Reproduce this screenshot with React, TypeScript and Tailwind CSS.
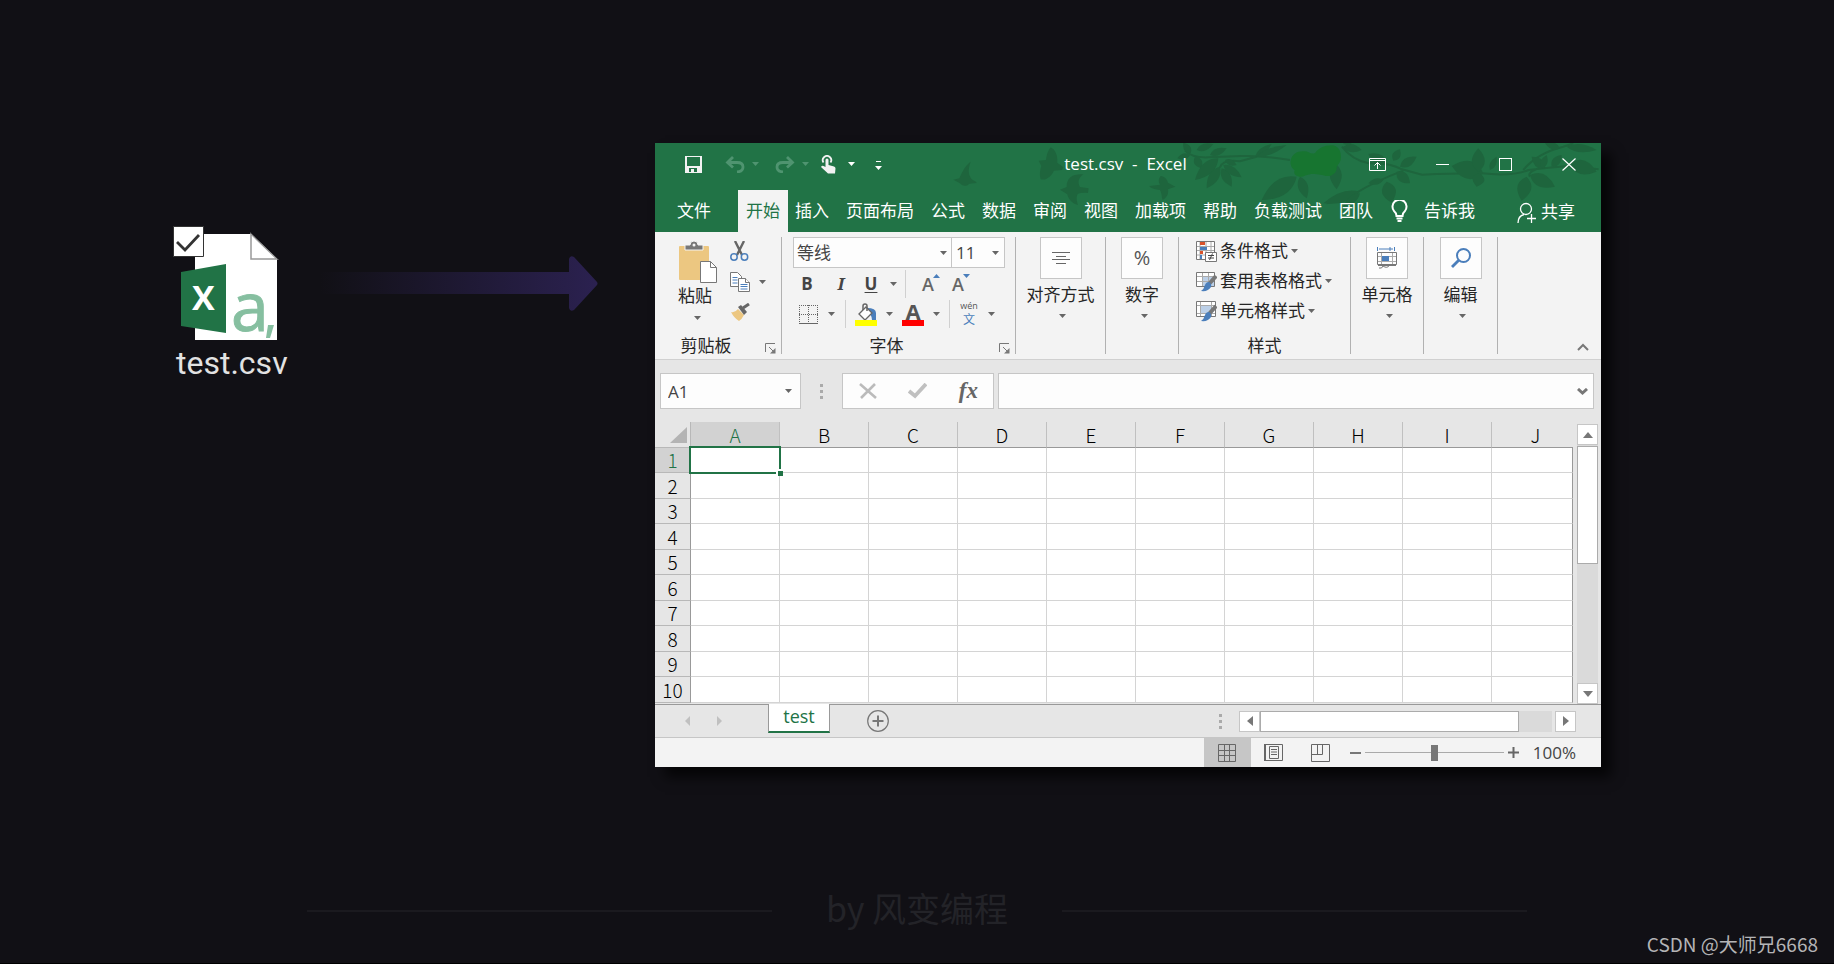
import type { ReactNode } from 'react';
import clsx from 'clsx';

const COLUMNS = ['A', 'B', 'C', 'D', 'E', 'F', 'G', 'H', 'I', 'J'];
const ROWS = [1, 2, 3, 4, 5, 6, 7, 8, 9, 10];
const TABS = ['插入', '页面布局', '公式', '数据', '审阅', '视图', '加载项', '帮助', '负载测试', '团队'];

function Caret({ className }: { className?: string }) {
  return (
    <svg viewBox="0 0 7 4" className={clsx('w-[7px] h-1 shrink-0', className)} fill="currentColor">
      <path d="M0 0h7L3.500 4z" />
    </svg>
  );
}

function CaretButton({ label, className }: { label: string; className?: string }) {
  return (
    <button aria-label={label} className={clsx('flex h-5 items-center justify-center text-[#666]', className)}>
      <Caret />
    </button>
  );
}

// Leaf from its base (x1, y1) to its tip (x2, y2)
function Leaf({ p }: { p: number[] }) {
  const [x1, y1, x2, y2, w] = p;
  const dx = x2 - x1;
  const dy = y2 - y1;
  const len = Math.hypot(dx, dy);
  const nx = (-dy / len) * w * 1.5;
  const ny = (dx / len) * w * 1.5;
  const mx = x1 + dx * 0.4;
  const my = y1 + dy * 0.4;
  return <path d={`M${x1} ${y1}Q${mx + nx} ${my + ny} ${x2} ${y2}Q${mx - nx} ${my - ny} ${x1} ${y1}z`} />;
}

const LEAVES = [
  [180, 45, 142, 55, 12], [182, 40, 160, 8, 14], [200, 30, 250, 12, 14], [240, 45, 290, 25, 14],
  [195, 50, 215, 85, 16], [265, 55, 195, 120, 24], [270, 80, 230, 145, 20], [275, 85, 305, 140, 18],
  [280, 75, 335, 112, 16], [285, 60, 320, 75, 12], [375, 50, 425, 12, 12], [380, 50, 470, 15, 12],
  [500, 110, 395, 180, 32], [510, 110, 530, 175, 20], [615, 70, 620, 148, 24], [640, 20, 695, 30, 16],
  [640, 12, 680, -10, 14], [690, 155, 580, 190, 20], [690, 160, 640, 200, 14], [770, 70, 715, 42, 20],
  [790, 62, 810, 28, 16], [810, 80, 860, 50, 18], [800, 95, 840, 130, 20], [770, 125, 785, 188, 28],
  [760, 120, 715, 130, 12], [1060, 100, 965, 78, 36], [1045, 95, 1045, 25, 26], [1050, 100, 1040, 140, 24],
  [1080, 90, 1100, 50, 12], [1190, 110, 1175, 182, 28], [1200, 105, 1275, 140, 26], [1245, 85, 1205, 50, 18],
  [1235, 85, 1250, 45, 14], [1265, 80, 1295, 45, 16], [1290, 25, 1245, 10, 14], [1310, 20, 1400, 30, 16],
  [1320, 70, 1400, 95, 28],
];

function TitleArt() {
  return (
    <svg viewBox="0 0 946 89" className="absolute right-0 top-0 h-[89px] w-[946px]" fill="#1e653d" aria-hidden="true">
      <g transform="translate(-5 -3) scale(.3333)">
        <path d="M962 65c-6 18-8 32-2 44 2 8 8 12 18 16l2 4-22 2c-4 6-14 8-22 4-6-8-16-10-26-16l18-4c10-22 18-38 34-50z" />
        <path d="M1202 22c12 6 22 22 20 46l18 14-4 8-24 2c-8 16-22 30-40 26-4-14-2-28 2-40l-8-16 22-2c2-16 6-28 14-38z" />
        <path d="M1300 103c-30-2-50 8-50 38l-20 8 22 14c4 16 14 28 32 32-4-14-6-26 0-34 12-4 22-2 30-2l2-14-26-4c-8-14-4-28 10-38z" />
      </g>
      <g transform="translate(475 -3) scale(.3333)">
        <path d="M92 108c-8 10-6 18-2 26l-32 4c4 8 20 10 32 12 6 10 4 20 8 30 14-8 18-18 16-32l22-8-22-12c-2-10-10-18-22-20z" />
        <path
          d="M165 32q20 22 70 20l100-4q60-2 145 12M270 82q10-25 60-18l50-14M636 20q30 40 80 50 60-4 100 18l60 16q120-6 180-4 90 10 140-10 60-8 120-12l90 10M590 190q60-10 90-32 60-36 140-66M1180 90q40-50 120-70l30-10M1200 110q-10-14 30-26"
          fill="none"
          stroke="#1e653d"
          strokeWidth="6"
        />
        {LEAVES.map((p, i) => (
          <Leaf key={i} p={p} />
        ))}
        <path fill="#177530" d="M482 62c4-20 20-30 42-28 12 0 20 12 32 4 10-14 30-24 54-22 16 4 26 20 22 44-4 14-12 14-12 26-2 16-18 24-32 22-16-4-30-6-44-6-16 2-24 10-36 8-12-2-18-10-14-20-8-4-14-16-12-28z" />
      </g>
    </svg>
  );
}

function TitleBar() {
  return (
    <div className="relative grid h-[47px] grid-cols-[1fr_auto_1fr] items-center pb-[5px] pr-[25px] text-white">
      <div className="flex items-center pl-[30px]">
        <button aria-label="保存">
          <svg viewBox="0 0 17 17" className="h-[17px] w-[17px]">
            <path fillRule="evenodd" d="M0 0h17v17H0zM2 1v9h13V1zM4 12v4h2v-3h3v3h3v-4z" fill="#f2f2f2" />
          </svg>
        </button>
        <button aria-label="撤消" className="ml-[23px] flex items-center gap-[7px] text-[#4f9470]">
          <svg viewBox="0 0 20 17" className="h-[17px] w-5" fill="none" stroke="currentColor" strokeWidth="2.800">
            <path d="M8 1 2.500 6.500l5.500 5M2.500 6.500H12q6 0 6 4.500t-6 5" />
          </svg>
          <Caret />
        </button>
        <button aria-label="恢复" className="ml-4 flex items-center gap-[7px] text-[#4f9470]">
          <svg viewBox="0 0 20 17" className="h-[17px] w-5" fill="none" stroke="currentColor" strokeWidth="2.800">
            <path d="m12 1 5.500 5.500-5.500 5M17.500 6.500H8q-6 0-6 4.500t6 5" />
          </svg>
          <Caret />
        </button>
        <button aria-label="触摸/鼠标模式" className="ml-[11px] flex items-center gap-3">
          <svg viewBox="0 0 16 19" className="h-[19px] w-4" fill="#f2f2f2">
            <path d="M5.500 5a1.500 1.500 0 0 1 3 0v5l5.500 1.500q1.500.5 1.500 2L15 18.500H8L1 12q1-2 2.500-1l2 1z" />
            <path d="M3.500 7.500A4.200 4.200 0 1 1 10.500 7.500" fill="none" stroke="#f2f2f2" strokeWidth="1.800" />
          </svg>
          <Caret />
        </button>
        <button aria-label="自定义快速访问工具栏" className="ml-5 flex flex-col items-center gap-1 pt-[2px]">
          <span className="h-px w-[5px] bg-white" />
          <Caret className="w-[6px]" />
        </button>
      </div>
      <h1 className="whitespace-pre pl-5 text-[17px] leading-6">test.csv  -  Excel</h1>
      <div className="flex items-center justify-end gap-[50px]">
        <button aria-label="功能区显示选项">
          <svg viewBox="0 0 17 13" className="h-[13px] w-[17px]" fill="none" stroke="white">
            <path d="M.5.5h16v12H.5zM.5 2.500h16M8.500 11V4.500M5.500 7.500l3-3 3 3" />
          </svg>
        </button>
        <button aria-label="最小化" className="h-px w-[13px] bg-white" />
        <button aria-label="最大化" className="h-[13px] w-[13px] border border-white" />
        <button aria-label="关闭">
          <svg viewBox="0 0 14 13" className="h-[13px] w-[14px]" fill="none" stroke="white" strokeWidth="1.200">
            <path d="m.5.5 13 12M13.500.5l-13 12" />
          </svg>
        </button>
      </div>
    </div>
  );
}

function RibbonTabs() {
  return (
    <nav className="relative flex h-[42px] items-center whitespace-nowrap text-[17px] leading-6 text-white">
      <button className="ml-[22px]">文件</button>
      <button className="ml-[27px] h-full bg-[#f3f3f3] px-2 text-[#217346]">开始</button>
      <div className="ml-[7px] flex gap-[17px]">
        {TABS.map((tab) => (
          <button key={tab}>{tab}</button>
        ))}
      </div>
      <button className="ml-[18px] flex items-center gap-4">
        <svg viewBox="0 0 17 22" className="h-[22px] w-[17px]" fill="none" stroke="white" strokeWidth="2">
          <path d="M5.500 16q0-3-2.500-5a7 7 0 1 1 11 0q-2.500 2-2.500 5z" />
          <path d="M5.500 18.500h6M6.500 21h4" />
        </svg>
        告诉我
      </button>
      <button className="ml-auto mr-[26px] flex items-center gap-1">
        <svg viewBox="0 0 20 22" className="mt-1 h-[22px] w-5" fill="none" stroke="white" strokeWidth="1.300">
          <circle cx="9" cy="7" r="5.500" />
          <path d="M1 21q0-7 6-8.500M14.500 12v9M10 16.500h9" />
        </svg>
        <span className="pt-[2px]">共享</span>
      </button>
    </nav>
  );
}

interface GroupProps {
  label?: string;
  labelClass?: string;
  className?: string;
  launcher?: boolean;
  children: ReactNode;
}

function Group({ label, labelClass, className, launcher, children }: GroupProps) {
  return (
    <section className={clsx('relative flex h-[117px] shrink-0 flex-col border-r border-[#b1b1b1]', className)}>
      <div className="flex flex-1">{children}</div>
      {label && <div className={clsx('mb-[-4px] text-center leading-6', labelClass)}>{label}</div>}
      {launcher && (
        <button aria-label={label + '设置'} className="absolute bottom-0 right-[5px]">
          <svg viewBox="0 0 11 11" className="h-[11px] w-[11px]" fill="none" stroke="#777">
            <path d="M.5 9V.5H10M4 4l5 5" />
            <path d="M10.500 5v5.500H5z" fill="#777" stroke="none" />
          </svg>
        </button>
      )}
    </section>
  );
}

function BigButton({ label, children }: { label: string; children: ReactNode }) {
  return (
    <button className="flex w-full flex-col items-center text-[#262626]">
      <span className="flex h-[42px] w-[42px] items-center justify-center border border-[#c6c6c6] bg-[#fdfdfd]">{children}</span>
      <span className="mt-1 leading-6">{label}</span>
      <Caret className="ml-1 mt-[7px] text-[#666]" />
    </button>
  );
}

function Brush() {
  return (
    <>
      <path d="m20 5-7 8" stroke="#777" strokeWidth="4" />
      <path d="M13 11q3 2 2 5-3 5-10 4 3-2 4-6 1-3 4-3z" fill="#4a7ebb" />
    </>
  );
}

function ConditionalIcon() {
  return (
    <svg viewBox="0 0 21 21" className="h-[21px] w-[21px]">
      <path d="M.5.5h18v18H.5z" fill="#fff" stroke="#777" />
      <path d="M4 1v17M10 1v17M15 1v17M1 5.500h17M1 9.500h17M1 14h17" stroke="#aaa" />
      <path d="M4 1h5v3H4zM4 10h3v3H4z" fill="#d9532c" />
      <path d="M4 6h7v3H4zM4 14h2v4H4z" fill="#4a7ebb" />
      <path d="M9.500 11.500h11v9h-11z" fill="#fff" stroke="#777" />
      <path d="M12 14.500h6M12 17h6M16.500 12.500 13.500 19" stroke="#444" />
    </svg>
  );
}

function TableFormatIcon() {
  return (
    <svg viewBox="0 0 21 21" className="h-[21px] w-[21px]" fill="none">
      <path d="M.5 1.500h18v14H.5z" fill="#fff" stroke="#777" />
      <path d="M7 6h11v9H7z" fill="#bcd0e8" />
      <path d="M6.500 2v13M12.500 2v13M1 5.500h17M1 10.500h17" stroke="#aaa" />
      <Brush />
    </svg>
  );
}

function CellStyleIcon() {
  return (
    <svg viewBox="0 0 21 21" className="h-[21px] w-[21px]" fill="none">
      <path d="M.5.5h19v15H.5z" fill="#fff" stroke="#777" />
      <path d="M5 5h10v7H5z" fill="#bcd0e8" />
      <path d="M4.500 1v14M15.500 1v14M1 4.500h18M1 12.500h18" stroke="#aaa" />
      <Brush />
    </svg>
  );
}

function ClipboardGroup() {
  return (
    <Group label="剪贴板" labelClass="pr-6" launcher className="w-[127px]">
      <button className="ml-[23px] flex w-[42px] flex-col items-start pt-1">
        <svg viewBox="0 0 39 43" className="h-[43px] w-[39px]">
          <path d="M2 5h28q1 0 1 1v33H2q-1 0-1-1V6q0-1 1-1z" fill="#ecc781" />
          <path d="M7 9V4h5q0-4 4-4t4 4h5v5z" fill="#777" stroke="#f3f3f3" />
          <circle cx="16" cy="4" r="1.500" fill="#f3f3f3" />
          <path d="M22.500 20.500h10l6 6v15h-16z" fill="#fff" stroke="#777" />
          <path d="M32.500 20.500v6h6" fill="none" stroke="#777" />
        </svg>
        <span className="leading-6">粘贴</span>
        <Caret className="ml-4 mt-2 text-[#666]" />
      </button>
      <div className="ml-[10px] flex flex-col gap-[11px] pt-1">
        <button aria-label="剪切">
          <svg viewBox="0 0 19 20" className="h-5 w-[19px]" fill="none">
            <path d="M5 0 12 14M14 0 7 14" stroke="#666" strokeWidth="2.400" />
            <circle cx="4" cy="16" r="3.200" stroke="#4a7ebb" strokeWidth="1.500" />
            <circle cx="14.500" cy="16" r="3.200" stroke="#4a7ebb" strokeWidth="1.500" />
          </svg>
        </button>
        <div className="flex items-center gap-[9px]">
          <button aria-label="复制">
            <svg viewBox="0 0 20 20" className="h-5 w-5" fill="#fff" stroke="#777">
              <path d="M.5.5h7l4 4v10H.5z" />
              <path d="M2.500 5.500h5M2.500 8h5M2.500 11h5" stroke="#4a7ebb" />
              <path d="M8.500 6.500h7l4 4v9h-11z" />
              <path d="M15.500 6.500v4h4" />
              <path d="M10.500 12.500h7M10.500 14.500h7M10.500 17h7" stroke="#4a7ebb" />
            </svg>
          </button>
          <CaretButton label="复制选项" />
        </div>
        <button aria-label="格式刷">
          <svg viewBox="0 0 20 18" className="h-[18px] w-5">
            <path d="M1 9q4 1 7-3l6 6q-2 4-5 6-5-3-8-9z" fill="#ecc781" />
            <path d="m8 4 3-2 6 7-3 3z" fill="#666" />
            <path d="m13 5 6-4" stroke="#666" strokeWidth="3" />
          </svg>
        </button>
      </div>
    </Group>
  );
}

function FontGroup() {
  return (
    <Group label="字体" labelClass="pr-6" launcher className="w-[234px]">
      <div className="ml-[11px] w-[212px]">
        <div className="flex h-[31px] border border-[#c6c6c6] bg-[#fdfdfd]">
          <div className="relative flex-1 border-r border-[#c6c6c6]">
            <select aria-label="字体" className="h-full w-full appearance-none pl-[3px] text-[#444] outline-none">
              <option>等线</option>
            </select>
            <Caret className="pointer-events-none absolute right-1 top-[13px] text-[#666]" />
          </div>
          <div className="relative w-[52px]">
            <select aria-label="字号" className="h-full w-full appearance-none pl-1 text-[#444] outline-none">
              <option>11</option>
            </select>
            <Caret className="pointer-events-none absolute right-[5px] top-[13px] text-[#666]" />
          </div>
        </div>
        <div className="flex h-[31px] items-center font-bold text-[#444]">
          <button className="w-7">B</button>
          <button className="ml-2 w-6 font-['Noto_Serif','DejaVu_Serif',serif] italic">I</button>
          <button className="ml-2 w-5 underline underline-offset-2">U</button>
          <CaretButton label="下划线选项" className="w-6" />
          <span className="h-7 w-px bg-[#d0d0d0]" />
          <button aria-label="增大字号" className="relative ml-4 w-[18px] text-left text-lg font-semibold text-[#666]">
            A
            <svg viewBox="0 0 7 4" className="absolute right-0 top-1 h-1 w-[7px]" fill="#4a7ebb"><path d="M0 4h7L3.500 0z" /></svg>
          </button>
          <button aria-label="减小字号" className="relative ml-3 w-[18px] text-left text-lg font-semibold text-[#666]">
            A
            <svg viewBox="0 0 7 4" className="absolute right-0 top-1 h-1 w-[7px]" fill="#4a7ebb"><path d="M0 0h7L3.500 4z" /></svg>
          </button>
        </div>
        <div className="flex h-[30px] items-center">
          <button aria-label="边框" className="ml-[6px]">
            <svg viewBox="0 0 19 19" className="h-[19px] w-[19px]" fill="none" stroke="#666">
              <path d="M.5 0v18M18.500 0v18M9.500 0v18M0 .5h19M0 9.500h19" strokeDasharray="1 1" />
              <path d="M0 18.500h19" />
            </svg>
          </button>
          <CaretButton label="边框选项" className="w-7" />
          <span className="h-7 w-px bg-[#d0d0d0]" />
          <button aria-label="填充颜色" className="ml-[10px]">
            <svg viewBox="0 0 22 23" className="h-[23px] w-[22px]">
              <path d="M12 5q9 0 9 5v7h-4q0-6-5-7z" fill="#4a7ebb" />
              <path d="m4 11 7-7 6 6-7 7z" fill="#fff" stroke="#666" strokeWidth="1.300" />
              <path d="M8 7V3q0-2 2-2t2 2v5" fill="none" stroke="#666" strokeWidth="1.500" />
              <path d="M0 17h22v6H0z" fill="#ff0" />
            </svg>
          </button>
          <CaretButton label="填充选项" className="w-[26px]" />
          <button aria-label="字体颜色" className="flex w-[23px] flex-col items-center">
            <span className="text-[22px] font-bold leading-[18px] text-[#555]">A</span>
            <span className="h-[6px] w-full bg-[#f00]" />
          </button>
          <CaretButton label="字体颜色选项" className="w-[26px]" />
          <span className="h-7 w-px bg-[#d0d0d0]" />
          <button className="ml-[10px] flex w-5 flex-col items-center text-[#555]">
            <span className="text-[9px] leading-[12px]">wén</span>
            <span className="text-xs leading-[16px] text-[#4a7ebb]">文</span>
          </button>
          <CaretButton label="拼音选项" className="w-7" />
        </div>
      </div>
    </Group>
  );
}

function Ribbon() {
  return (
    <div className="flex h-[128px] overflow-hidden border-b border-[#d0d0d0] bg-[#f3f3f3] pt-[5px] text-[17px] text-[#262626]">
      <ClipboardGroup />
      <FontGroup />
      <Group className="w-[90px]">
        <BigButton label="对齐方式">
          <svg viewBox="0 0 18 12" className="h-3 w-[18px]" stroke="#666">
            <path d="M0 .5h18M4 4.500h10M0 7.500h18M4 11.500h10" />
          </svg>
        </BigButton>
      </Group>
      <Group className="w-[73px]">
        <BigButton label="数字">
          <span className="text-xl text-[#555]">%</span>
        </BigButton>
      </Group>
      <Group label="样式" className="w-[172px]">
        <div className="ml-[17px] mt-[-1px] flex flex-col">
          <button className="flex h-[30px] items-center gap-[3px]">
            <ConditionalIcon />
            条件格式 <Caret className="text-[#666]" />
          </button>
          <button className="flex h-[30px] items-center gap-[3px]">
            <TableFormatIcon />
            套用表格格式 <Caret className="text-[#666]" />
          </button>
          <button className="flex h-[30px] items-center gap-[3px]">
            <CellStyleIcon />
            单元格样式 <Caret className="text-[#666]" />
          </button>
        </div>
      </Group>
      <Group className="w-[73px]">
        <BigButton label="单元格">
          <svg viewBox="0 0 20 22" className="h-[22px] w-5" fill="none" stroke="#777">
            <path d="M.5 0v4M17.500 0v4M2 2h14M13 0v4" stroke="#4a7ebb" />
            <path d="M.5 5.500h19v12H.5zM1 18.500h18M2 21q3 1 4-2 4 3 7-1" />
            <path d="M4.500 6v11M15.500 6v11M1 9.500h18M1 14.500h18" stroke="#aaa" />
            <path d="M5 9h7v5H5z" fill="#4a7ebb" stroke="none" />
          </svg>
        </BigButton>
      </Group>
      <Group className="w-[74px]">
        <BigButton label="编辑">
          <svg viewBox="0 0 20 20" className="h-5 w-5" fill="none" stroke="#4a7ebb">
            <circle cx="12.500" cy="7.500" r="6.500" strokeWidth="2" />
            <path d="m8 12-7 7" strokeWidth="2.800" />
          </svg>
        </BigButton>
      </Group>
      <button aria-label="折叠功能区" className="mb-2 ml-auto mr-3 self-end">
        <svg viewBox="0 0 12 8" className="h-2 w-3" fill="none" stroke="#777" strokeWidth="2">
          <path d="m1 7 5-5 5 5" />
        </svg>
      </button>
    </div>
  );
}

function Dots() {
  return (
    <span className="flex flex-col gap-[3px]">
      <span className="h-[3px] w-[3px] bg-[#aaa]" />
      <span className="h-[3px] w-[3px] bg-[#aaa]" />
      <span className="h-[3px] w-[3px] bg-[#aaa]" />
    </span>
  );
}

function FormulaBar() {
  return (
    <div className="flex items-center px-[5px] pb-[13px] pt-[13px] pr-[7px]">
      <div className="relative h-9 w-[141px] border border-[#c6c6c6] bg-[#fdfdfd]">
        <input aria-label="名称框" defaultValue="A1" className="h-full w-full px-[7px] text-[17px] text-[#444] outline-none" />
        <Caret className="pointer-events-none absolute right-2 top-[15px] text-[#666]" />
      </div>
      <span className="mx-[19px]">
        <Dots />
      </span>
      <div className="flex h-9 w-[152px] items-center justify-between border border-[#c6c6c6] bg-[#fdfdfd] pl-4 pr-[15px]">
        <button aria-label="取消">
          <svg viewBox="0 0 18 16" className="h-4 w-[18px]" stroke="#bbb" strokeWidth="2.600">
            <path d="m1 1 16 14M16 1 2 15" />
          </svg>
        </button>
        <button aria-label="输入">
          <svg viewBox="0 0 19 16" className="h-4 w-[19px]" fill="none" stroke="#c0c0c0" strokeWidth="3.800">
            <path d="m1 8 6 5L18 1" />
          </svg>
        </button>
        <button className="font-['Liberation_Serif',serif] text-[23px] font-bold italic leading-6 text-[#666]">fx</button>
      </div>
      <div className="relative ml-1 h-9 flex-1 border border-[#c6c6c6] bg-[#fdfdfd]">
        <input aria-label="编辑栏" className="h-full w-full px-2 text-[17px] outline-none" />
        <button aria-label="展开编辑栏" className="absolute right-[5px] top-[14px]">
          <svg viewBox="0 0 11 7" className="h-[7px] w-[11px]" fill="none" stroke="#777" strokeWidth="3">
            <path d="m1 1 4.500 4L10 1" />
          </svg>
        </button>
      </div>
    </div>
  );
}

function Sheet() {
  return (
    <div className="flex">
      <table className="mb-px min-w-0 flex-1 table-fixed border-separate border-spacing-0 bg-white font-['Noto_Sans_CJK_SC',sans-serif] text-[19px] font-light text-black">
        <colgroup>
          <col className="w-9" />
          {COLUMNS.slice(0, -1).map((c) => (
            <col key={c} className="w-[89px]" />
          ))}
          <col />
        </colgroup>
        <thead>
          <tr className="h-[26px]">
            <th className="border-b border-r border-[#b8b8b8] bg-[#e6e6e6] p-0">
              <svg viewBox="0 0 17 16" className="ml-auto mr-[3px] h-4 w-[17px]" fill="#b4b4b4">
                <path d="M17 0v16H0z" />
              </svg>
            </th>
            {COLUMNS.map((c) => (
              <th
                key={c}
                scope="col"
                className={clsx(
                  'border-b border-r border-b-[#999] border-r-[#c0c0c0] p-0 font-light leading-[25px] last:border-r-0 last:pl-[6px]',
                  c === 'A' ? 'bg-[#d2d2d2] text-[#217346]' : 'bg-[#e6e6e6]',
                )}
              >
                {c}
              </th>
            ))}
          </tr>
        </thead>
        <tbody>
          {ROWS.map((r) => (
            <tr key={r} className="odd:h-[25px] even:h-[26px]">
              <th
                scope="row"
                className={clsx(
                  'border-b border-r border-b-[#b8b8b8] border-r-[#999] p-0 font-light leading-6',
                  r === 1 ? 'bg-[#d2d2d2] text-[#217346]' : 'bg-[#e6e6e6]',
                )}
              >
                {r}
              </th>
              {COLUMNS.map((c) => (
                <td key={c} className="relative border-b border-r border-[#d4d4d4] p-0 last:border-r-[#999]">
                  {r === 1 && c === 'A' && (
                    <span className="absolute -bottom-[2px] -left-[2px] -right-[2px] -top-[2px] z-10 border-2 border-[#217346]">
                      <span className="absolute -bottom-1 -right-1 h-[7px] w-[7px] border-l-2 border-t-2 border-white bg-[#217346]" />
                    </span>
                  )}
                </td>
              ))}
            </tr>
          ))}
        </tbody>
      </table>
      <div className="ml-1 mr-[3px] mt-[2px] flex w-[21px] flex-col bg-[#dadada]">
        <button aria-label="向上滚动" className="flex h-[21px] items-center justify-center border border-[#c6c6c6] bg-white text-[#777]">
          <svg viewBox="0 0 10 6" className="h-[6px] w-[10px]" fill="currentColor"><path d="M0 6h10L5 0z" /></svg>
        </button>
        <div className="mt-px h-[118px] border border-[#ababab] bg-white" />
        <button aria-label="向下滚动" className="mt-auto flex h-[21px] items-center justify-center border border-[#c6c6c6] bg-white text-[#777]">
          <svg viewBox="0 0 10 6" className="h-[6px] w-[10px]" fill="currentColor"><path d="M0 0h10L5 6z" /></svg>
        </button>
      </div>
    </div>
  );
}

function SheetBar() {
  return (
    <div className="flex h-[34px] items-center border-b border-t border-b-[#c6c6c6] border-t-[#999] pr-[25px]">
      <button aria-label="上一个工作表" className="ml-[30px] text-[#c0c0c0]">
        <svg viewBox="0 0 5 10" className="h-[10px] w-[5px]" fill="currentColor"><path d="M5 0v10L0 5z" /></svg>
      </button>
      <button aria-label="下一个工作表" className="ml-[27px] text-[#c0c0c0]">
        <svg viewBox="0 0 5 10" className="h-[10px] w-[5px]" fill="currentColor"><path d="M0 0v10l5-5z" /></svg>
      </button>
      <button className="-mt-px ml-[46px] h-[29px] w-[62px] self-start border-x border-b-2 border-x-[#999] border-b-[#217346] bg-white pb-1 text-[18px] leading-6 text-[#217346]">
        test
      </button>
      <button aria-label="新工作表" className="ml-[37px]">
        <svg viewBox="0 0 22 22" className="h-[22px] w-[22px]" fill="none" stroke="#777">
          <circle cx="11" cy="11" r="10.300" strokeWidth="1.200" />
          <path d="M11 5.500v11M5.500 11h11" strokeWidth="2" />
        </svg>
      </button>
      <span className="ml-auto mr-[17px]">
        <Dots />
      </span>
      <div className="flex h-[21px] w-[337px]">
        <button aria-label="向左滚动" className="flex w-[21px] items-center justify-center border border-[#c6c6c6] bg-white text-[#777]">
          <svg viewBox="0 0 6 10" className="h-[10px] w-[6px]" fill="currentColor"><path d="M6 0v10L0 5z" /></svg>
        </button>
        <div className="w-[259px] border border-[#ababab] bg-white" />
        <div className="flex-1 bg-[#dadada]" />
        <button aria-label="向右滚动" className="ml-[3px] flex w-[21px] items-center justify-center border border-[#c6c6c6] bg-white text-[#777]">
          <svg viewBox="0 0 6 10" className="h-[10px] w-[6px]" fill="currentColor"><path d="M0 0v10l6-5z" /></svg>
        </button>
      </div>
    </div>
  );
}

function StatusBar() {
  return (
    <div className="flex h-[29px] items-center justify-end bg-[#f3f3f3] pr-[25px]">
      <button aria-label="普通" className="flex h-full w-[47px] items-center justify-center bg-[#c6c6c6]">
        <svg viewBox="0 0 18 18" className="h-[18px] w-[18px]" fill="none" stroke="#666">
          <path d="M.5.5h17v17H.5zM6.500 0v18M11.500 0v18M0 6.500h18M0 11.500h18" />
        </svg>
      </button>
      <button aria-label="页面布局视图" className="ml-[13px]">
        <svg viewBox="0 0 19 17" className="h-[17px] w-[19px]" fill="none" stroke="#666">
          <path d="M.5.5h18v16H.5zM5.500 2.500h9v12h-9zM7 5.500h6M7 8h6M7 10.500h6" />
          <path d="M1 0v17" strokeWidth="2" />
        </svg>
      </button>
      <button aria-label="分页预览" className="ml-7">
        <svg viewBox="0 0 19 18" className="h-[18px] w-[19px]" fill="none" stroke="#666">
          <path d="M.5.5h18v17H.5zM.5 10.500h11V.5M6.500.5v10" />
        </svg>
      </button>
      <button aria-label="缩小" className="ml-5 h-[2px] w-[11px] bg-[#777]" />
      <input
        type="range"
        aria-label="显示比例"
        defaultValue={50}
        className="ml-1 h-4 w-[139px] appearance-none bg-transparent bg-[linear-gradient(#aaa,#aaa)] bg-[length:100%_1px] bg-center bg-no-repeat [&::-webkit-slider-thumb]:h-4 [&::-webkit-slider-thumb]:w-[7px] [&::-webkit-slider-thumb]:appearance-none [&::-webkit-slider-thumb]:bg-[#777]"
      />
      <button aria-label="放大" className="ml-1">
        <svg viewBox="0 0 11 11" className="h-[11px] w-[11px]" stroke="#666" strokeWidth="2">
          <path d="M5.500 0v11M0 5.500h11" />
        </svg>
      </button>
      <span className="ml-[14px] text-[17px] leading-6 text-[#444]">100%</span>
    </div>
  );
}

function ExcelWindow() {
  return (
    <section className="min-w-0 flex-1 bg-[#e6e6e6] shadow-[10px_10px_12px_rgba(0,0,0,0.7)]">
      <header className="relative overflow-hidden bg-[#217346]">
        <TitleArt />
        <TitleBar />
        <RibbonTabs />
      </header>
      <Ribbon />
      <FormulaBar />
      <Sheet />
      <SheetBar />
      <StatusBar />
    </section>
  );
}

function CsvFile() {
  return (
    <div className="mt-[83px] flex w-[118px] shrink-0 flex-col">
      <label className="relative block">
        <svg viewBox="0 0 104 115" className="h-[115px] w-[104px] overflow-visible">
          <path d="M22 8h56l26 25v81H22z" fill="#fff" />
          <path d="M78 8v25h26z" fill="#fff" stroke="#999" strokeWidth="1.500" />
          <path d="m78 7 27 26V7z" fill="#111015" />
          <path d="M8 46 53 38v69L8 100z" fill="#217346" />
          <text x="19" y="84" fontSize="34" fontWeight="700" fill="#fff" fontFamily="'Open Sans', sans-serif">X</text>
          <text x="58" y="105" fontSize="68" fill="#86bfa0" stroke="#86bfa0" fontFamily="'Open Sans', sans-serif">a</text>
          <path d="M95 99h6l-4 13h-4z" fill="#86bfa0" />
          <path d="M.5.5h30v30H.5z" fill="#fff" stroke="#333" />
          <path d="m4 16 8 8L26 9" fill="none" stroke="#333" strokeWidth="2.800" />
        </svg>
        <input type="checkbox" defaultChecked aria-label="test.csv" className="absolute left-0 top-0 h-[31px] w-[31px] appearance-none" />
      </label>
      <span className="ml-[3px] mt-1 font-[Roboto,sans-serif] text-[32px] leading-9 text-[#e2e2e2]">test.csv</span>
    </div>
  );
}

export default function App() {
  return (
    <main className="flex min-h-screen flex-col border-b border-black bg-[#111015] font-['Open_Sans','Noto_Sans_CJK_SC',sans-serif]">
      <div className="flex items-start pl-[173px] pr-[233px] pt-[143px]">
        <CsvFile />
        <svg viewBox="0 0 278 55" className="ml-[29px] mr-[57px] mt-[113px] h-[55px] w-[278px] shrink-0" aria-hidden="true">
          <defs>
            <linearGradient id="fade">
              <stop offset="0" stopColor="#2b2150" stopOpacity="0" />
              <stop offset="1" stopColor="#2b2150" />
            </linearGradient>
          </defs>
          <path d="M0 16h249V3q1-4 5-2l23 25q1 1.500 0 3L254 54q-4 2-5-2V38H0z" fill="url(#fade)" />
        </svg>
        <ExcelWindow />
      </div>
      <footer className="mt-[125px] flex items-center px-[307px] text-[#232328]">
        <span className="h-[2px] flex-1 bg-[#1b1a1f]" />
        <p className="mx-[54px] pb-[6px] font-['Noto_Sans_CJK_SC',sans-serif] text-[34px] leading-8">by 风变编程</p>
        <span className="h-[2px] flex-1 bg-[#1b1a1f]" />
      </footer>
      <p className="mb-[7px] mr-4 mt-auto self-end font-['Noto_Sans_CJK_SC',sans-serif] text-[19px] leading-6 text-[#b4b4b6]">CSDN @大师兄6668</p>
    </main>
  );
}
